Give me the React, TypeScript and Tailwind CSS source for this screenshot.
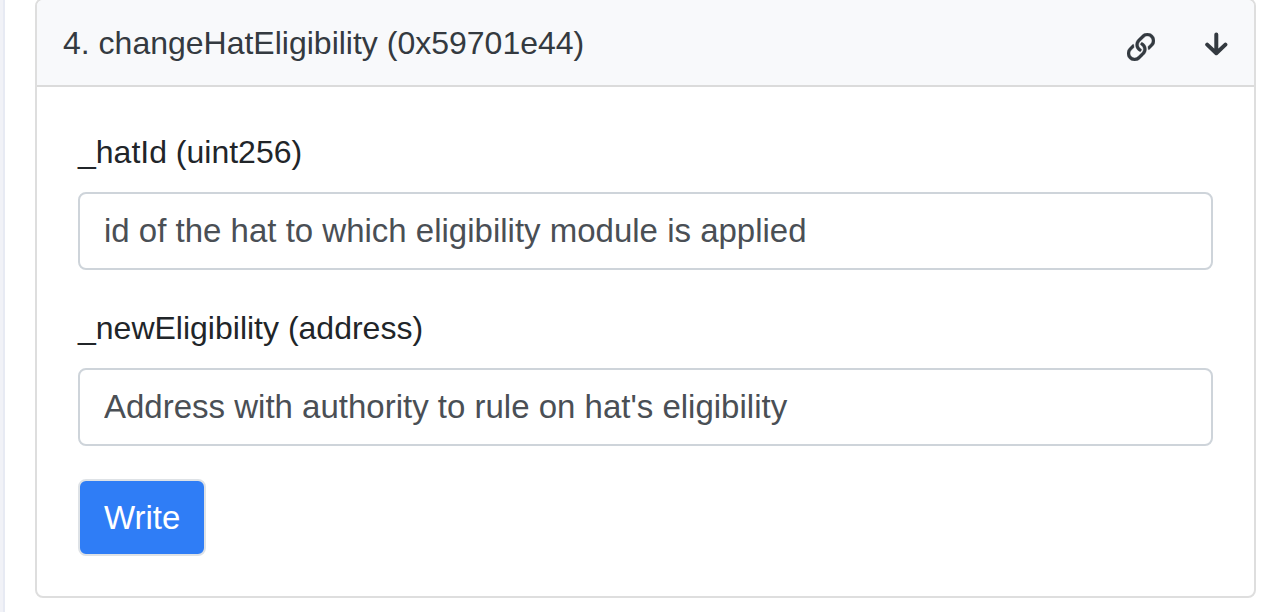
const fields = [
  { id: 'hat-id', label: '_hatId (uint256)', hint: 'id of the hat to which eligibility module is applied' },
  { id: 'new-eligibility', label: '_newEligibility (address)', hint: "Address with authority to rule on hat's eligibility" },
];

function LinkIcon() {
  return (
    <svg viewBox="0 0 512 512" className="size-7" fill="currentColor" stroke="currentColor" strokeWidth="6" aria-hidden="true">
      <path d="M314.222 197.78c51.091 51.091 54.377 132.287 9.75 187.16-6.242 7.73-2.784 3.865-84.94 86.02-54.696 54.696-143.266 54.745-197.99 0-54.711-54.69-54.734-143.255 0-197.99 32.773-32.773 51.835-51.899 63.409-63.457 7.463-7.452 20.331-2.354 20.486 8.192a173.31 173.31 0 0 0 4.746 37.828c.966 4.029-.272 8.269-3.202 11.198L80.632 312.57c-32.755 32.775-32.887 85.892 0 118.8 32.775 32.755 85.892 32.887 118.8 0l75.19-75.2c32.718-32.725 32.777-86.013 0-118.79a83.722 83.722 0 0 0-22.814-16.229c-4.623-2.233-7.182-7.25-6.561-12.346 1.356-11.122 6.296-21.885 14.815-30.405l4.375-4.375c3.625-3.626 9.177-4.594 13.76-2.294 12.999 6.524 25.187 15.211 36.025 26.049zM470.958 41.04c-54.724-54.745-143.294-54.696-197.99 0-82.156 82.156-78.698 78.29-84.94 86.02-44.627 54.873-41.341 136.069 9.75 187.16 10.838 10.838 23.026 19.525 36.025 26.049 4.582 2.3 10.134 1.331 13.76-2.294l4.375-4.375c8.52-8.519 13.459-19.283 14.815-30.405.621-5.096-1.938-10.113-6.561-12.346a83.706 83.706 0 0 1-22.814-16.229c-32.777-32.777-32.718-86.065 0-118.79l75.19-75.2c32.908-32.887 86.025-32.755 118.8 0 32.887 32.908 32.755 86.025 0 118.8l-45.848 45.84c-2.93 2.929-4.168 7.169-3.202 11.198a173.31 173.31 0 0 1 4.746 37.828c.155 10.546 13.023 15.644 20.486 8.192 11.574-11.558 30.636-30.684 63.409-63.457 54.733-54.735 54.71-143.3-.001-197.991z" />
    </svg>
  );
}

function ArrowDownIcon() {
  return (
    <svg viewBox="0 0 24 24" className="size-6" fill="none" stroke="currentColor" strokeWidth="4" strokeLinecap="round" aria-hidden="true">
      <path d="M12.3 2.4V20M3.2 12.6l9.1 8.6 9.1-8.6" strokeLinejoin="round" />
    </svg>
  );
}

export default function App() {
  return (
    <div className="flex min-h-screen overflow-hidden bg-white font-['Liberation_Sans',Arial,sans-serif] text-[32px] leading-12 text-[#212529]">
      <div className="w-[5px] shrink-0 border-r-2 border-[#e7eaf3] bg-[#f1f2f7]" />
      <main className="min-w-0 grow pr-[30px] pb-3.5 pl-[30px]">
        <section className="-mt-0.5 overflow-hidden rounded-lg border-2 border-[#dedede]">
          <header className="flex items-center justify-between border-b-2 border-[#dbdbdb] bg-[#f8f9fb] pt-[19px] pr-[26px] pb-[18px] pl-[26px] text-[#343a40]">
            <h2>4. changeHatEligibility (0x59701e44)</h2>
            <div className="flex items-center gap-[49px] pt-0.5">
              <a href="#change-hat-eligibility" aria-label="Link to this method" className="pt-1.5">
                <LinkIcon />
              </a>
              <button type="button" aria-label="Collapse">
                <ArrowDownIcon />
              </button>
            </div>
          </header>
          <form id="change-hat-eligibility" className="px-[41px] pt-[41px] pb-10">
            <div className="grid gap-[34px]">
              {fields.map((field) => (
                <div key={field.id}>
                  <label htmlFor={field.id} className="mb-4 block">
                    {field.label}
                  </label>
                  <input
                    id={field.id}
                    type="text"
                    placeholder={field.hint}
                    className="block h-[78px] w-full rounded-lg border-2 border-[#ced4da] bg-white px-6 text-[33px] placeholder:text-[#4a4f55] placeholder:opacity-100"
                  />
                </div>
              ))}
            </div>
            <button type="button" className="mt-[33px] block h-[77px] rounded-lg border-2 border-[#dee2e6] bg-[#2f7df6] px-6 text-[33px] text-white">
              Write
            </button>
          </form>
        </section>
      </main>
    </div>
  );
}
